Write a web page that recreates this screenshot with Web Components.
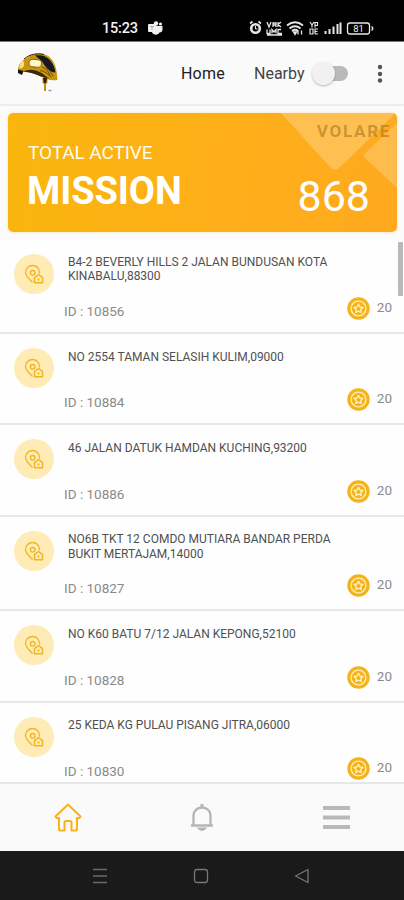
<!DOCTYPE html>
<html lang="en">
<head>
<meta charset="utf-8">
<title>Missions</title>
<style>
html, body {
	margin: 0;
	height: 100%;
}

body {
	overflow: hidden;
	font-family: Roboto, "Liberation Sans", sans-serif;
	background: #fff;
}
</style>
</head>
<body>
<mission-app></mission-app>

<script>
const define = (name, style, markup) => {
	const template = document.createElement('template');
	template.innerHTML = `<style>${style}</style>${markup}`;

	window.customElements.define(name, class extends HTMLElement {
		constructor() {
			super();

			this.attachShadow({ mode: 'open' }).appendChild(template.content.cloneNode(true));
		}
	});
};

define('status-bar', `
:host {
	display: flex;
	align-items: center;
	box-sizing: border-box;
	height: 42px;
	flex: none;
	padding: 15px 29px 0 102px;
	background: #000;
	border-bottom: 1px solid #777;
	color: #f2f2f2;
}

time {
	font-size: 14.5px;
	font-weight: 500;
	letter-spacing: -.2px;
	width: 46px;
}

.space {
	flex: 1;
}

svg {
	display: block;
	flex: none;
}
`, `
<time>15:23</time>
<svg width="15" height="15" viewBox="0 0 15 15" fill="#eee">
	<rect x="0" y="3" width="8" height="8" rx="1"/>
	<circle cx="8" cy="2.5" r="2.2"/><circle cx="12.5" cy="3" r="1.6"/>
	<path d="M5 5h9.500v4a3 3 0 0 1-3 2.500C10 15 4 14 3.500 10z"/>
	<path d="M2 5.500h4M4 5.500v3" stroke="#aaa" fill="none"/>
</svg>
<span class="space"></span>
<svg width="126" height="16" viewBox="0 0 126 16" fill="none" stroke="#e6e6e6">
	<circle cx="6.500" cy="8.500" r="4.300" stroke-width="2.600"/>
	<path d="M1 3.500 3.500 1.500M12 3.500 9.500 1.500" stroke-width="1.700"/>
	<path d="M6.500 6v3h2" stroke-width="1"/>
	<path d="M18 2l2 5 2-5M24 7V3h3v4M24 5h3M29 2v5M29 4.500l3-2.500M29 4.500l3 2.500" stroke-width="1.300"/>
	<path d="M18 9.500v4h3v-4M23 13.500v-4l2 2.500 2-2.500v4M32 9.500h-3v4h4M18 15h15" stroke-width="1.300"/>
	<path d="M38 5.500q8-6.500 16 0M40.500 8.500q5.500-4.500 11 0M43 11q3-2.500 6 0" stroke-width="1.800"/>
	<path d="M44.500 12h3L46 14.500zM49 10.500v4M52.500 10.500v4" fill="#e6e6e6" stroke-width="1.300"/>
	<path d="M61 2l2 3 2-3M63 5v2.500M66 7.500V2.500h2.500v3H66M61 9h3v5h-3zM66 14V9h3M66 11.500h2.500M66 14h3" stroke-width="1.200"/>
	<path d="M76.500 14v-3M80.500 14V9M84.500 14V6.500M88.500 14V4M91.500 14V2.500" stroke-width="2"/>
	<rect x="98.500" y="3" width="22" height="11" rx="2.500" stroke-width="1.300"/>
	<path d="M122.500 6.500q2.500 2 0 4" stroke-width="1.500"/>
	<text x="109.500" y="12" font-size="9.500" text-anchor="middle" fill="#eee" stroke="none">81</text>
</svg>
`);

define('app-logo', `
:host {
	display: block;
	width: 42px;
	height: 42px;
}

svg {
	display: block;
}
`, `
<svg width="42" height="42" viewBox="0 0 42 42">
	<path d="M1 19C1 12 5 8 10 6C17 0 28 0 34 6.500C39 12 40 20 40.500 28C34 29 29 27 24 24.500C18 21.500 11 20 6 19.500C6 23 2 23 1 19z" fill="#cb940f"/>
	<path d="M18 3.500C30 1.500 37 10 38.500 20.500C33 20 30 17 27 12.500C25 8.500 21 6 18 3.500z" fill="#161925"/>
	<path d="M7 7C13 2 20 1 27 2.500" stroke="#2d230c" fill="none"/>
	<path d="M9 18.500C17 16 25 20 32 27L24 24.500C18 22 13 20 6 19.500z" fill="#3a2c0b"/>
	<rect x="12" y="7.500" width="12.500" height="7.500" rx="3.700" fill="#fff7c4" stroke="#8b640c" transform="rotate(6 18 11)"/>
	<path d="M6 8.500c-3 2-4 5-3.500 8 4 1 6-5 3.500-8z" fill="#f7e084"/>
	<path d="M25 15q6 2 8 9M29 15.500q5 3 7 9M23 18.500q7 1 11 7" fill="none" stroke="#6d500b" stroke-width="1"/>
	<path d="M1 17.500l5.500 1.500-1.500 4-4-2z" fill="#151515"/>
	<path d="M25.500 26h5v5l-1.500 1v7h-2v-7l-1.500-1z" fill="#c28b12"/>
	<path d="M26 26h4l-1 5h-2z" fill="#2b210b"/>
	<path d="M31.500 38.500h3" stroke="#999" stroke-width="1.500"/>
</svg>
`);

define('toggle-switch', `
:host {
	display: flex;
	align-items: center;
	width: 36px;
	height: 24px;
}

.thumb {
	width: 23px;
	height: 23px;
	flex: none;
	border-radius: 50%;
	background: #f1f1f1;
	box-shadow: 0 1px 2px #0004;
	z-index: 1;
}

.track {
	width: 24px;
	height: 15px;
	flex: none;
	margin-left: -11px;
	border-radius: 0 8px 8px 0;
	background: #b9b9b9;
}
`, `<span class="thumb"></span><span class="track"></span>`);

define('app-header', `
:host {
	display: flex;
	align-items: center;
	box-sizing: border-box;
	flex: none;
	height: 64px;
	padding: 0 20px 0 17px;
	background: #fafafa;
	border-bottom: 2px solid #ededed;
	font-size: 16px;
}

.home, .nearby {
	padding-top: 1px;
}

.home {
	margin-left: 122px;
	width: 73px;
	letter-spacing: .2px;
	color: #202020;
}

.nearby {
	width: 58px;
	color: #444;
}

svg {
	margin-left: auto;
}
`, `
<app-logo></app-logo>
<span class="home">Home</span>
<span class="nearby">Nearby</span>
<toggle-switch></toggle-switch>
<svg width="8" height="20" viewBox="0 0 8 20" fill="#555">
	<circle cx="4" cy="4" r="2.200"/><circle cx="4" cy="11" r="2.200"/><circle cx="4" cy="17.500" r="2.200"/>
</svg>
`);

define('mission-banner', `
:host {
	display: grid;
	grid-template: 100% / 1fr;
	box-sizing: border-box;
	flex: none;
	height: 119px;
	margin: 7px 7px 0 8px;
	border-radius: 5px;
	overflow: hidden;
	background: linear-gradient(100deg, #f9b60c, #feb018 50%, #fea91f);
	box-shadow: 0 0 3px #f4b73c66;
	color: #fff;
}

svg, .content {
	grid-area: 1 / 1;
}

svg {
	justify-self: end;
}

.content {
	display: flex;
	justify-content: space-between;
	z-index: 1;
	padding: 0 7px 0 20px;
}

.label {
	margin-top: 29px;
	font-size: 19px;
	line-height: 22px;
	letter-spacing: -.1px;
	color: #fffbe8;
	white-space: nowrap;
}

.name {
	font-size: 38px;
	line-height: 44px;
	margin-top: 5px;
	margin-left: -1px;
	font-weight: 700;
	letter-spacing: -.1px;
}

.right {
	display: flex;
	flex-direction: column;
	align-items: flex-end;
}

.brand {
	margin-top: 8px;
	font-size: 17px;
	line-height: 20px;
	font-weight: 700;
	letter-spacing: 1.700px;
	margin-right: -1px;
	color: #a9752099;
}

.count {
	margin: 30px 20px 0 0;
	font-size: 43px;
	line-height: 50px;
}
`, `
<svg width="120" height="119" viewBox="0 0 120 119">
	<path d="M4 0H119L63 54Q58 59 53 54z" fill="#ffc052"/>
	<path d="M120 8L88 38Q85 41 88 45L120 75z" fill="#ffbc4c"/>
	<path d="M119 0L78 41L83 45L120 10z" fill="#fdac22"/>
</svg>
<div class="content">
	<div>
		<div class="label">TOTAL ACTIVE</div>
		<div class="name">MISSION</div>
	</div>
	<div class="right">
		<div class="brand">VOLARE</div>
		<div class="count">868</div>
	</div>
</div>
`);

define('location-badge', `
:host {
	display: flex;
	align-items: center;
	justify-content: center;
	flex: none;
	width: 40px;
	height: 40px;
	border-radius: 50%;
	background: #feebb5;
}
`, `
<svg width="20" height="20" viewBox="0 0 20 20" fill="none" stroke="#f2b51d" stroke-width="1.300" stroke-linejoin="round">
	<path d="M8.500 18.500C5 15 1.500 12 1.500 8.500a7 7 0 0 1 14 0v1"/>
	<circle cx="8.700" cy="8.800" r="2.300"/>
	<path d="M14.500 10.500l4 3.200v5h-8v-5z" stroke-width="1.500"/>
	<path d="M14.500 14.500v2" stroke-width="1.800"/>
</svg>
`);

define('coin-icon', `
:host {
	display: block;
	width: 23px;
	height: 23px;
}

svg {
	display: block;
}
`, `
<svg width="23" height="23" viewBox="0 0 23 23" fill="none" stroke="#fff0b8" stroke-linejoin="round">
	<circle cx="11.500" cy="11.500" r="11.200" fill="#f4b31c" stroke="none"/>
	<circle cx="11.500" cy="11.500" r="7.400" stroke-width="1.300"/>
	<path d="M11.500 7.300l1.400 2.700 3 .4-2.200 2.100.5 3-2.700-1.400-2.700 1.400.5-3-2.200-2.100 3-.4z" stroke-width="1.400"/>
</svg>
`);

define('mission-row', `
:host {
	display: flex;
	box-sizing: border-box;
	flex: none;
	padding: 14px 12px 0 14px;
	border-bottom: 2px solid #e8e8e8;
}

.body {
	flex: 1;
	display: flex;
	flex-direction: column;
	padding: 1.500px 0 13px 10px;
}

.address {
	width: 275px;
	margin-left: 4px;
	font-size: 12px;
	line-height: 14.400px;
	color: #505050;
}

.meta {
	display: flex;
	align-items: flex-end;
	margin-top: auto;
	color: #8a8a8a;
}

.id {
	flex: 1;
	font-size: 13.500px;
	line-height: 16px;
}

coin-icon {
	margin-bottom: -1px;
}

.points {
	margin: 0 0 4px 7px;
	font-size: 13.500px;
	line-height: 16px;
}
`, `
<location-badge></location-badge>
<div class="body">
	<div class="address"><slot></slot></div>
	<div class="meta">
		<span class="id"><slot name="id"></slot></span>
		<coin-icon></coin-icon>
		<span class="points"><slot name="points"></slot></span>
	</div>
</div>
`);

define('mission-list', `
:host {
	display: flex;
	flex: 1;
	min-height: 0;
	margin-top: 7.500px;
	overflow: hidden;
	background: #fefefe;
}

.rows {
	flex: 1;
	display: flex;
	flex-direction: column;
}

.thumb {
	width: 5px;
	height: 54px;
	margin: 2.500px 1px 0 -6px;
	border-radius: 1px;
	background: #b9b9b9;
}
`, `<div class="rows"><slot></slot></div><span class="thumb"></span>`);

define('tab-bar', `
:host {
	display: grid;
	grid-template-columns: repeat(3, 1fr);
	place-items: center;
	box-sizing: border-box;
	flex: none;
	height: 69px;
	padding: 0 0 2px 1px;
	border-top: 2px solid #e6e6e6;
	background: #fafafa;
}
`, `
<svg width="28" height="30" viewBox="0 0 28 30" fill="none" stroke="#f9b216" stroke-width="2" stroke-linejoin="round">
	<path d="M14 2.500L1.500 14.500l1 1.500H5v11.500q0 1 1 1h4.500v-8q0-1.500 1.500-1.500h4q1.500 0 1.500 1.500v8H22q1 0 1-1V16h2.500l1-1.500z"/>
</svg>
<svg width="24" height="28" viewBox="0 0 24 28" fill="none" stroke="#b5b5b5" stroke-width="2">
	<path d="M1 22.500h22M3.500 22.500V12.500C3.500 8 7 4.500 12 4.500s8.500 3.500 8.500 8v10" stroke-width="2.300"/>
	<path d="M12 1v4" stroke-width="3"/>
	<path d="M9 25.500q3 3 6 0z" fill="#b5b5b5"/>
</svg>
<svg width="28" height="24" viewBox="0 0 28 24" fill="#b9b9b9">
	<path d="M0 1h27v4H0zM0 10.500h27v4H0zM0 20h27v4H0z"/>
</svg>
`);

define('system-nav', `
:host {
	display: flex;
	justify-content: space-between;
	align-items: center;
	box-sizing: border-box;
	flex: none;
	height: 49px;
	padding: 0 94px 0 92px;
	background: #1a1a1a;
}
`, `
<svg width="16" height="16" viewBox="0 0 16 16" stroke="#6b6b6b" stroke-width="1.300"><path d="M1 1.500h14M1 8h14M1 14.500h14"/></svg>
<svg width="16" height="16" viewBox="0 0 16 16" fill="none" stroke="#777" stroke-width="1.300"><rect x="1.500" y="1.500" width="13" height="13" rx="2.500"/></svg>
<svg width="16" height="16" viewBox="0 0 16 16" fill="none" stroke="#777" stroke-width="1.300" stroke-linejoin="round"><path d="M1.500 8L14 1.500v13z"/></svg>
`);

define('mission-app', `
:host {
	display: flex;
	flex-direction: column;
	width: 100%;
	height: 900px;
	background: #fbfbfb;
}

mission-row {
	height: 91.200px;
}

mission-row.tall {
	height: 94.800px;
}
`, `
<status-bar></status-bar>
<app-header></app-header>
<mission-banner></mission-banner>
<mission-list>
	<mission-row class="tall">B4-2 BEVERLY HILLS 2 JALAN BUNDUSAN KOTA KINABALU,88300<span slot="id">ID : 10856</span><span slot="points">20</span></mission-row>
	<mission-row>NO 2554 TAMAN SELASIH KULIM,09000<span slot="id">ID : 10884</span><span slot="points">20</span></mission-row>
	<mission-row>46 JALAN DATUK HAMDAN KUCHING,93200<span slot="id">ID : 10886</span><span slot="points">20</span></mission-row>
	<mission-row class="tall">NO6B TKT 12 COMDO MUTIARA BANDAR PERDA BUKIT MERTAJAM,14000<span slot="id">ID : 10827</span><span slot="points">20</span></mission-row>
	<mission-row>NO K60 BATU 7/12 JALAN KEPONG,52100<span slot="id">ID : 10828</span><span slot="points">20</span></mission-row>
	<mission-row>25 KEDA KG PULAU PISANG JITRA,06000<span slot="id">ID : 10830</span><span slot="points">20</span></mission-row>
</mission-list>
<tab-bar></tab-bar>
<system-nav></system-nav>
`);
</script>
</body>
</html>
